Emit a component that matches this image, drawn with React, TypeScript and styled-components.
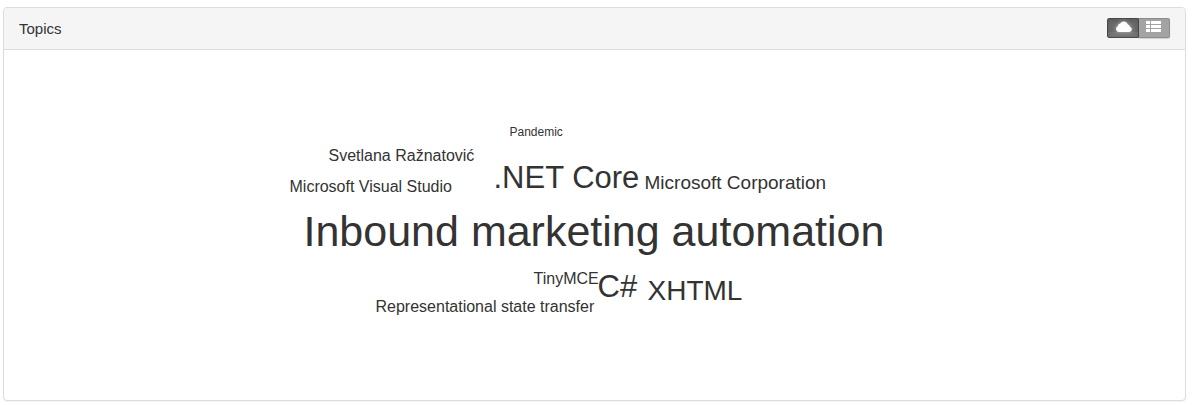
import React, { useState } from "react";
import styled, { createGlobalStyle } from "styled-components";

const GlobalStyle = createGlobalStyle`
  body {
    margin: 0;
    background: #fff;
    color: #333;
    font-family: "Liberation Sans", Arial, sans-serif;
  }
`;

const Page = styled.main`
  padding: 7px 7px 4px 3px;
`;

const Panel = styled.section`
  border: 1px solid #ddd;
  border-radius: 4px;
  box-shadow: 0 1px 1px rgba(0, 0, 0, 0.05);
  overflow: hidden;
`;

const PanelHeader = styled.header`
  display: flex;
  align-items: flex-start;
  justify-content: space-between;
  padding: 10px 15px;
  background: #f5f5f5;
  border-bottom: 1px solid #ddd;
`;

const Title = styled.h1`
  margin: 0;
  font-size: 15px;
  font-weight: 400;
  line-height: 21px;
`;

const ViewToggle = styled.div`
  display: flex;
`;

const ToggleButton = styled.button<{ $active: boolean }>`
  box-sizing: border-box;
  display: flex;
  align-items: flex-start;
  justify-content: flex-start;
  width: 32px;
  height: 20px;
  padding: 2px 0 0 8px;
  color: #fff;
  cursor: pointer;
  background: ${(p) => (p.$active ? "linear-gradient(#6a6a6a 75%, #747474 75%)" : "#a3a3a3")};
  border: 1px solid ${(p) => (p.$active ? "#484848" : "#8c8c8c")};
  box-shadow: ${(p) =>
    p.$active
      ? "inset 0 2px 4px rgba(0, 0, 0, 0.15)"
      : "0 1px 1px rgba(0, 0, 0, 0.15)"};

  &:first-child {
    border-radius: 2px 0 0 2px;
  }

  &:last-child {
    width: 31px;
    padding-left: 7px;
    border-left-width: 0;
    border-radius: 0 2px 2px 0;
  }

  svg {
    display: block;
    fill: currentColor;
    filter: ${(p) => (p.$active ? "drop-shadow(0 0 2px rgba(255, 255, 255, 0.5))" : "none")};
  }
`;

const PanelBody = styled.div`
  display: flex;
  justify-content: center;
`;

const Cloud = styled.div`
  position: relative;
  flex: 0 0 610px;
  height: 350px;
`;

const Word = styled.a<{ $x: number; $y: number; $size: number }>`
  position: absolute;
  left: ${(p) => p.$x}px;
  top: ${(p) => p.$y}px;
  font-size: ${(p) => p.$size}px;
  line-height: 1;
  white-space: nowrap;
  color: inherit;
  text-decoration: none;
`;

const TopicList = styled.ul`
  flex: 1;
  min-height: 320px;
  margin: 0;
  padding: 15px 30px;
  font-size: 16px;
  line-height: 24px;
`;

const topics = [
  { text: "Inbound marketing automation", size: 43, x: 14, y: 160 },
  { text: ".NET Core", size: 31, x: 204, y: 112 },
  { text: "C#", size: 31, x: 308, y: 221 },
  { text: "XHTML", size: 28, x: 358, y: 227 },
  { text: "Microsoft Corporation", size: 19, x: 355, y: 123 },
  { text: "Microsoft Visual Studio", size: 16, x: 0, y: 129 },
  { text: "Svetlana Ražnatović", size: 16, x: 39, y: 98 },
  { text: "TinyMCE", size: 16, x: 244, y: 221 },
  { text: "Representational state transfer", size: 16, x: 86, y: 249 },
  { text: "Pandemic", size: 12, x: 220, y: 76 },
];

const CloudIcon = () => (
  <svg width="16" height="11" viewBox="0 0 16 11" aria-hidden="true">
    <path d="M3.2 11A3.1 3.1 0 0 1 2.1 5 2.4 2.4 0 0 1 4.2 2.4 4.3 4.3 0 0 1 11.9 3.4 2.4 2.4 0 0 1 13.8 5.7 2.7 2.7 0 0 1 13.3 11Z" />
  </svg>
);

const ListIcon = () => (
  <svg width="15" height="11" viewBox="0 0 15 11" aria-hidden="true">
    <path d="M0 0H4V3H0ZM5 0H15V3H5ZM0 4H4V7H0ZM5 4H15V7H5ZM0 8H4V11H0ZM5 8H15V11H5Z" />
  </svg>
);

export default function App() {
  const [view, setView] = useState<"cloud" | "list">("cloud");

  return (
    <>
      <GlobalStyle />
      <Page>
        <Panel>
          <PanelHeader>
            <Title>Topics</Title>
            <ViewToggle role="group" aria-label="Topic view">
              <ToggleButton
                type="button"
                aria-label="Cloud view"
                aria-pressed={view === "cloud"}
                $active={view === "cloud"}
                onClick={() => setView("cloud")}
              >
                <CloudIcon />
              </ToggleButton>
              <ToggleButton
                type="button"
                aria-label="List view"
                aria-pressed={view === "list"}
                $active={view === "list"}
                onClick={() => setView("list")}
              >
                <ListIcon />
              </ToggleButton>
            </ViewToggle>
          </PanelHeader>
          <PanelBody>
            {view === "cloud" ? (
              <Cloud>
                {topics.map((t) => (
                  <Word key={t.text} href="#" $x={t.x} $y={t.y} $size={t.size}>
                    {t.text}
                  </Word>
                ))}
              </Cloud>
            ) : (
              <TopicList>
                {topics.map((t) => (
                  <li key={t.text}>{t.text}</li>
                ))}
              </TopicList>
            )}
          </PanelBody>
        </Panel>
      </Page>
    </>
  );
}
